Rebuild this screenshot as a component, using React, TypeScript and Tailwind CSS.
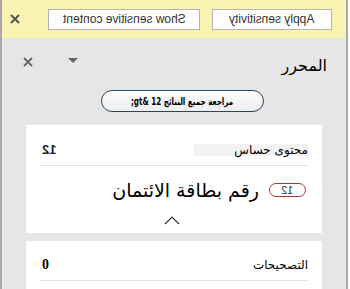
import React from "react";

const arabic = { fontFamily: '"DejaVu Sans", "Noto Sans", sans-serif' };
const latin = { fontFamily: '"Liberation Sans", Arial, sans-serif' };

function Mirror({ children, className = "" }: { children: React.ReactNode; className?: string }) {
  return <span className={`inline-block -scale-x-100 ${className}`}>{children}</span>;
}

export default function App() {
  return (
    <div className="w-[350px] h-[289px] overflow-hidden bg-white">
      <div className="w-[348px] h-[289px] border-x-2 border-[#a9a9a9] flex flex-col">
        {/* Message bar */}
        <div className="h-[38px] shrink-0 bg-[#faf4b2] flex items-center pl-[6px]" style={latin}>
          <svg width="14" height="14" viewBox="0 0 14 14" className="text-[#555]">
            <path d="M3 3L11 11M11 3L3 11" stroke="currentColor" strokeWidth="2" />
          </svg>
          <button className="ml-[26px] h-[21px] w-[152px] bg-white border border-[#b4b4b4] text-[12px] text-[#333] leading-none">
            <Mirror>Show sensitive content</Mirror>
          </button>
          <button className="ml-[12px] h-[21px] w-[120px] bg-white border border-[#b4b4b4] text-[12px] text-[#333] leading-none">
            <Mirror>Apply sensitivity</Mirror>
          </button>
        </div>

        {/* Pane */}
        <div className="flex-1 bg-[#e6e6e6] px-[24px] flex flex-col">
          <div className="flex items-center h-[42px] pt-[6px]">
            <svg width="12" height="12" viewBox="0 0 12 12" className="text-[#666] -ml-[4px]">
              <path d="M2 2L10 10M10 2L2 10" stroke="currentColor" strokeWidth="1.8" />
            </svg>
            <svg width="10" height="6" viewBox="0 0 10 6" className="text-[#666] ml-[34px] -mt-[2px]">
              <path d="M0 0H10L5 5Z" fill="currentColor" />
            </svg>
            <div dir="rtl" className="ml-auto mr-[-5px] text-[16px] text-black mt-[8px]" style={arabic}>
              المحرر
            </div>
          </div>

          <div className="flex mt-[10px] pl-[75px]">
            <button
              className="w-[163px] h-[22px] rounded-full border border-[#2a4762] bg-gradient-to-b from-[#fdfdfd] to-[#eeeeee] text-[10px] font-bold text-black flex items-center justify-center"
              style={arabic}
            >
              <span dir="ltr" className="inline-block scale-x-[0.72] whitespace-nowrap">
                ;gt&amp; 12 مراجعة جميع النتائج
              </span>
            </button>
          </div>

          {/* Card 1 */}
          <div className="mt-[13px] bg-white h-[108px] px-[14px] flex flex-col">
            <div className="flex items-center h-[41px] border-b border-[#e1e1e1] pt-[9px]">
              <Mirror className="text-[13px] font-bold text-[#222] ml-[2px]">
                <span style={latin}>12</span>
              </Mirror>
              <div
                dir="rtl"
                className="ml-auto h-[12px] flex items-center bg-[#f3f3f3] pl-[40px] text-[12px] text-black leading-none"
                style={arabic}
              >
                محتوى حساس
              </div>
            </div>
            <div className="flex items-center justify-end h-[36px] pt-[12px] pr-[2px]">
              <div dir="rtl" className="text-[19px] text-black leading-none" style={arabic}>
                رقم بطاقة الائتمان
              </div>
              <div className="ml-[10px] w-[37px] h-[14px] rounded-full border border-[#a4373a] flex items-center justify-center">
                <Mirror className="text-[11px] text-[#333] leading-none">
                  <span style={latin}>12</span>
                </Mirror>
              </div>
            </div>
            <div className="flex justify-center mt-[14px] -ml-[4px]">
              <svg width="16" height="9" viewBox="0 0 16 9" className="text-[#333]">
                <path d="M1 8L8 1L15 8" fill="none" stroke="currentColor" strokeWidth="1.2" />
              </svg>
            </div>
          </div>

          {/* Card 2 */}
          <div className="mt-[8px] bg-white flex-1 px-[14px]">
            <div className="flex items-center h-[40px] border-b border-[#e1e1e1] pt-[8px]">
              <span className="text-[14px] font-bold text-black ml-[2px]" style={{ fontFamily: '"Liberation Serif", serif' }}>
                0
              </span>
              <div dir="rtl" className="ml-auto text-[12px] text-black" style={arabic}>
                التصحيحات
              </div>
            </div>
          </div>
        </div>
      </div>
    </div>
  );
}
